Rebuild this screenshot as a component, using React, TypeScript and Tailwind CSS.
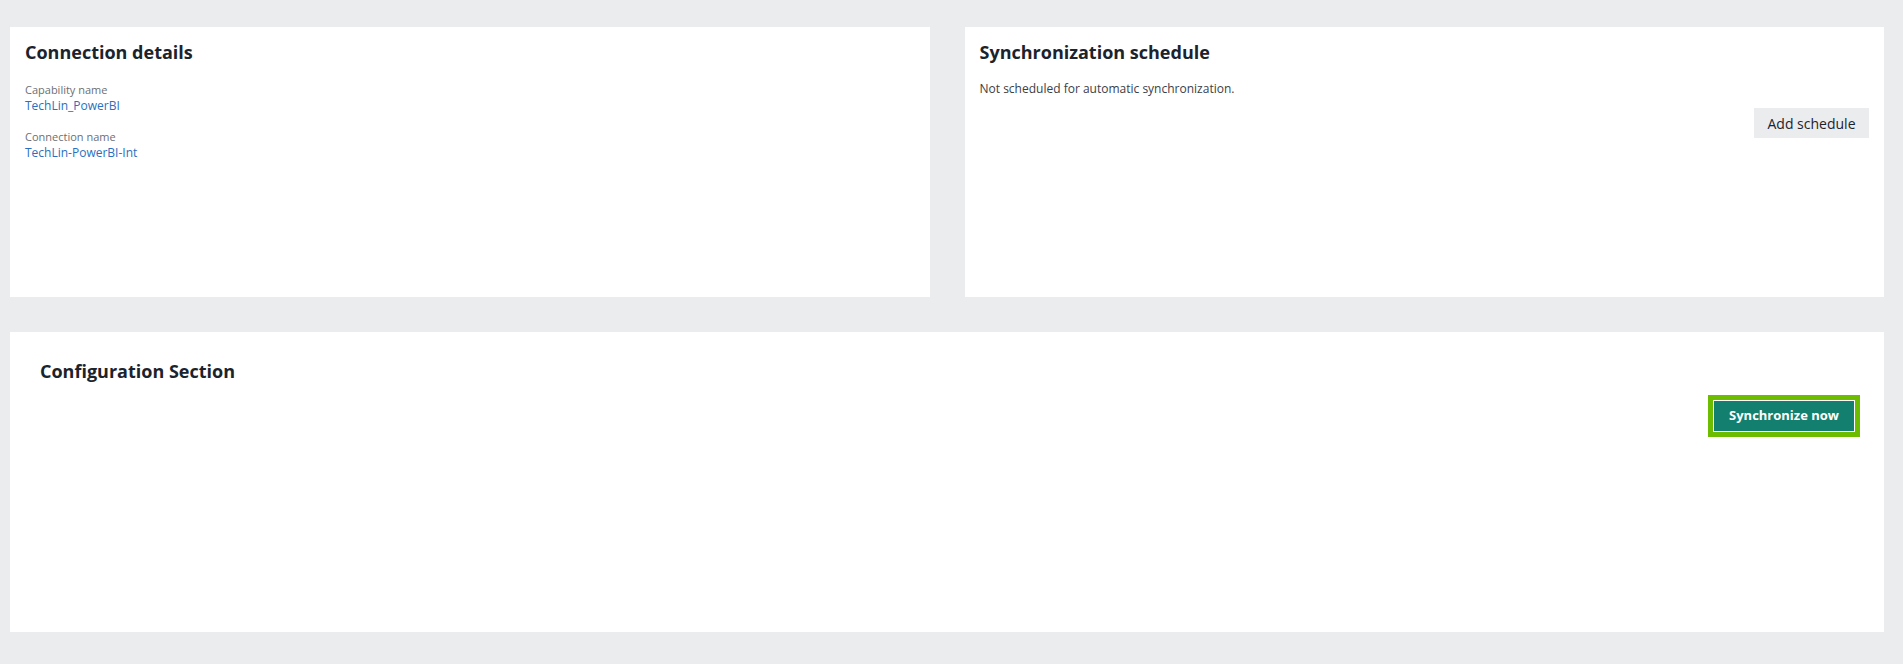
export default function App() {
  return (
    <main
      className="min-h-screen bg-[#ebecee] pl-[10px] pr-[19px] pt-[27px] pb-[32px] flex flex-col gap-[35px] text-[#1b232d]"
      style={{ fontFamily: '"Open Sans", "Noto Sans", sans-serif' }}
    >
      <div className="grid grid-cols-2 gap-[35px] h-[270px]">
        {/* Connection details */}
        <section className="bg-white px-[15px] pt-[13px]">
          <h2 className="text-[18px] leading-[24px] font-bold">Connection details</h2>
          <dl className="mt-[18px] flex flex-col gap-[15px]">
            <div>
              <dt className="text-[11px] leading-[15px] text-[#6b6f75]">Capability name</dt>
              <dd className="text-[12px] leading-[17px] text-[#2a6fc0]">TechLin_PowerBI</dd>
            </div>
            <div>
              <dt className="text-[11px] leading-[15px] text-[#6b6f75]">Connection name</dt>
              <dd className="text-[12px] leading-[17px] text-[#2a6fc0]">TechLin-PowerBI-Int</dd>
            </div>
          </dl>
        </section>

        {/* Synchronization schedule */}
        <section className="bg-white px-[15px] pt-[13px] flex flex-col">
          <h2 className="text-[18px] leading-[24px] font-bold">Synchronization schedule</h2>
          <p className="mt-[17px] text-[12px] leading-[16px] text-[#3b4047]">
            Not scheduled for automatic synchronization.
          </p>
          <div className="mt-[11px] flex justify-end">
            <button className="h-[30px] w-[115px] bg-[#ebecee] text-[14px] font-medium text-[#1b232d]">
              Add schedule
            </button>
          </div>
        </section>
      </div>

      {/* Configuration */}
      <section className="bg-white h-[300px] pl-[30px] pr-[24px] pt-[27px] flex flex-col">
        <h2 className="text-[18px] leading-[24px] font-bold">Configuration Section</h2>
        <div className="mt-[12px] flex justify-end">
          <div className="border-[5px] border-[#6dbc00] bg-white p-px">
            <button className="h-[30px] w-[140px] bg-[#13806f] text-[13px] font-bold text-white">
              Synchronize now
            </button>
          </div>
        </div>
      </section>
    </main>
  );
}
